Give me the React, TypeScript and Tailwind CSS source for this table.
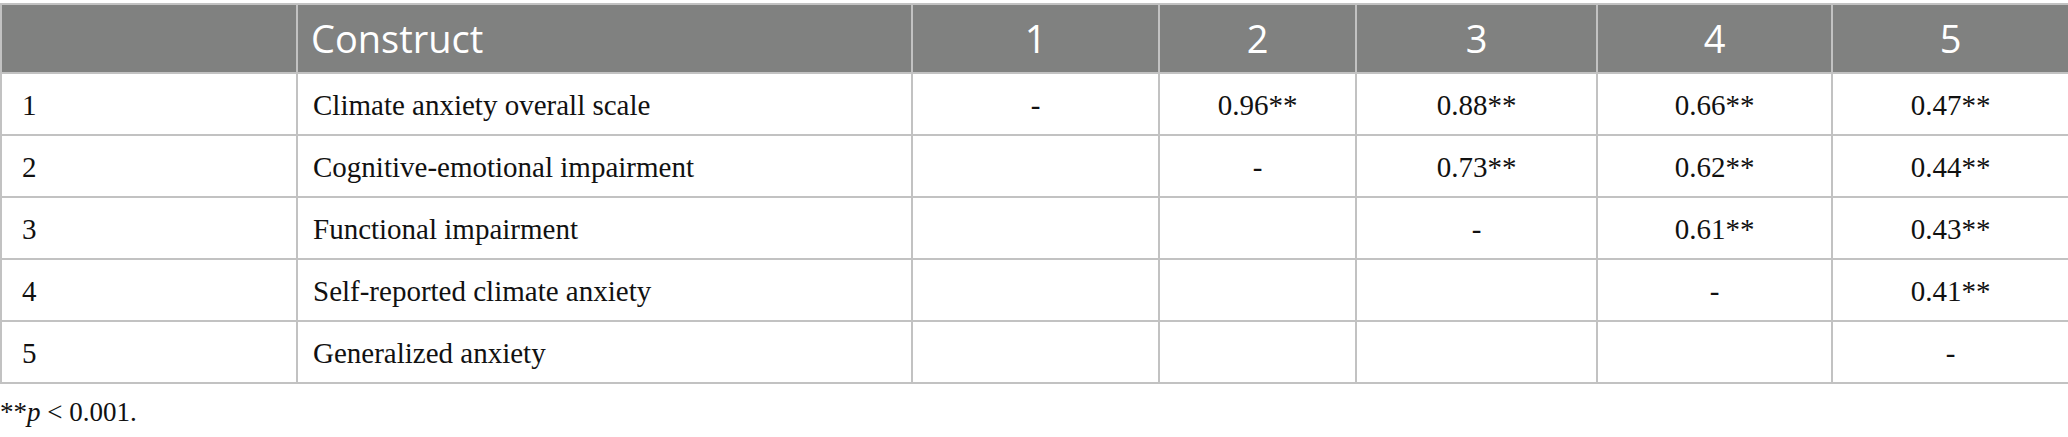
const cols = ["w-[296px]", "w-[615px]", "w-[247px]", "w-[197px]", "w-[241px]", "w-[235px]", "w-[237px]"];

const rows = [
  { n: "1", name: "Climate anxiety overall scale", vals: ["-", "0.96**", "0.88**", "0.66**", "0.47**"] },
  { n: "2", name: "Cognitive-emotional impairment", vals: ["", "-", "0.73**", "0.62**", "0.44**"] },
  { n: "3", name: "Functional impairment", vals: ["", "", "-", "0.61**", "0.43**"] },
  { n: "4", name: "Self-reported climate anxiety", vals: ["", "", "", "-", "0.41**"] },
  { n: "5", name: "Generalized anxiety", vals: ["", "", "", "", "-"] },
];

export default function App() {
  return (
    <div className="w-[2068px] h-[437px] bg-white pt-[3px] overflow-hidden">
      <table className="w-[2068px] table-fixed border-collapse font-['Liberation_Serif',serif] text-[29px] text-[#111]">
        <colgroup>
          {cols.map((c, i) => (
            <col key={i} className={c} />
          ))}
        </colgroup>
        <thead>
          <tr className="h-[69px] bg-[#808180] text-white font-['Open_Sans',sans-serif] text-[38px]">
            <th className="border-2 border-[#c2c2c2]" />
            <th className="border-2 border-[#c2c2c2] pl-[13px] text-left font-normal">Construct</th>
            {["1", "2", "3", "4", "5"].map((h) => (
              <th key={h} className="border-2 border-[#c2c2c2] text-center font-normal">
                {h}
              </th>
            ))}
          </tr>
        </thead>
        <tbody>
          {rows.map((r) => (
            <tr key={r.n} className="h-[62px]">
              <td className="border-2 border-[#c2c2c2] pl-[20px] pt-[3px]">{r.n}</td>
              <td className="border-2 border-[#c2c2c2] pl-[15px] pt-[3px]">{r.name}</td>
              {r.vals.map((v, i) => (
                <td key={i} className="border-2 border-[#c2c2c2] text-center pt-[3px]">
                  {v}
                </td>
              ))}
            </tr>
          ))}
        </tbody>
      </table>
      <p className="mt-[13px] font-['Liberation_Serif',serif] text-[27px] leading-[30px] text-[#111]">
        **<span className="italic">p</span> &lt; 0.001.
      </p>
    </div>
  );
}
